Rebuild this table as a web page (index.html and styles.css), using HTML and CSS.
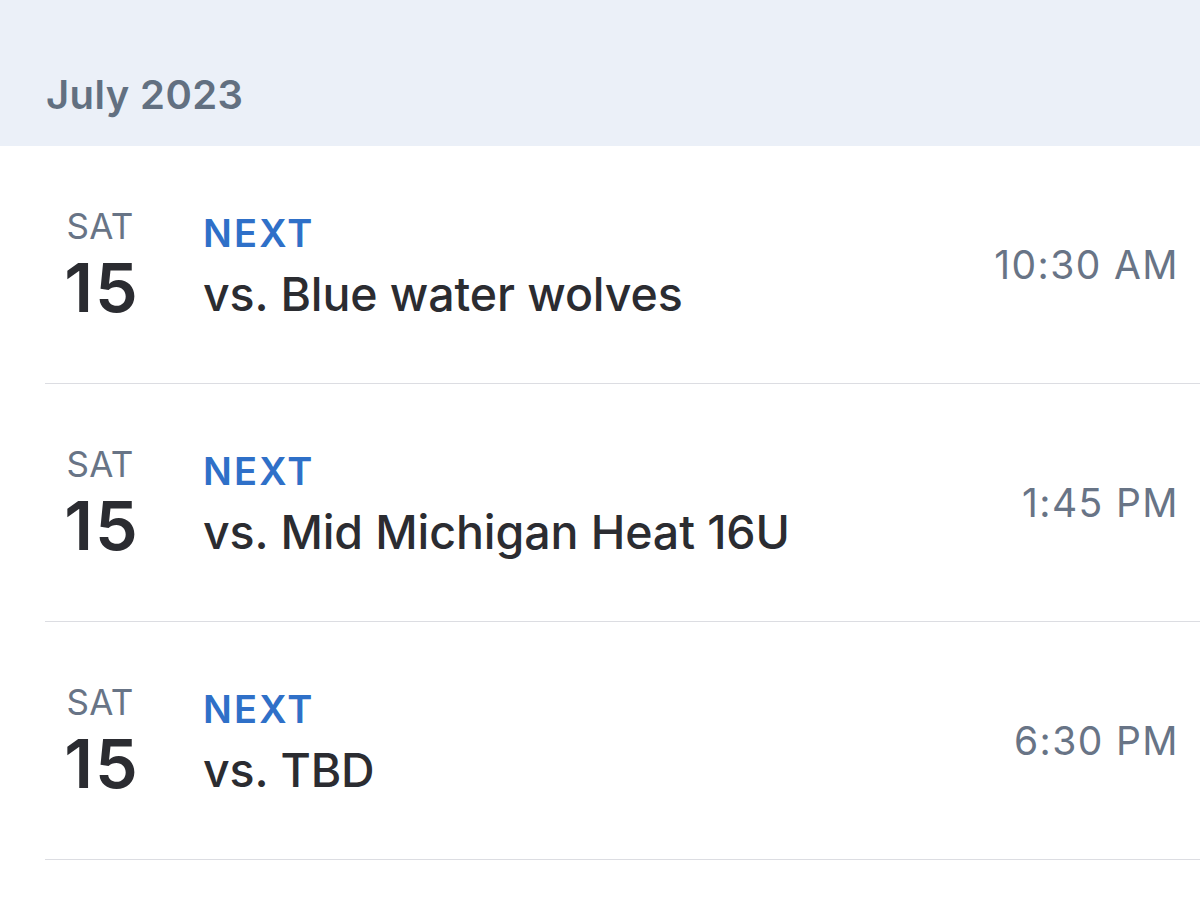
FILE: index.html
```html
<!DOCTYPE html>
<html lang="en">
<head>
<meta charset="utf-8">
<title>Schedule</title>
<link rel="stylesheet" href="styles.css">
</head>
<body>
<div class="month">July 2023</div>
<div class="list">
  <div class="row">
    <div class="date"><div class="dow">SAT</div><div class="day">15</div></div>
    <div class="info"><div class="tag">NEXT</div><div class="opp">vs. Blue water wolves</div></div>
    <div class="time">10:30 AM</div>
  </div>
  <div class="row">
    <div class="date"><div class="dow">SAT</div><div class="day">15</div></div>
    <div class="info"><div class="tag">NEXT</div><div class="opp">vs. Mid Michigan Heat 16U</div></div>
    <div class="time">1:45 PM</div>
  </div>
  <div class="row">
    <div class="date"><div class="dow">SAT</div><div class="day">15</div></div>
    <div class="info"><div class="tag">NEXT</div><div class="opp">vs. TBD</div></div>
    <div class="time">6:30 PM</div>
  </div>
</div>
</body>
</html>
```
FILE: styles.css
```css
* { box-sizing: border-box; }
html, body { margin: 0; padding: 0; background: #ffffff; }
body { font-family: Inter, "Noto Sans", "Liberation Sans", sans-serif; color: #2b2c31; }

.month {
  height: 146px;
  background: #ebf0f8;
  padding: 71px 0 0 46px;
  font-size: 40px;
  line-height: 48px;
  font-weight: 600;
  letter-spacing: 0.4px;
  color: #627081;
}

.list { padding-left: 45px; }

.row {
  display: flex;
  align-items: center;
  height: 238px;
  border-bottom: 1px solid #dcdde2;
  padding-right: 21px;
}

.date {
  width: 110px;
  padding-top: 2px;
  display: flex;
  flex-direction: column;
  align-items: center;
}
.dow {
  font-size: 35px;
  line-height: 40px;
  font-weight: 400;
  letter-spacing: 0.3px;
  color: #687486;
}
.day {
  margin-top: 3px;
  padding-left: 4px;
  font-size: 68px;
  line-height: 76px;
  font-weight: 600;
  letter-spacing: 2px;
  color: #2b2c31;
}

.info {
  flex: 1;
  margin-left: 48px;
  padding-top: 4px;
}
.tag {
  font-size: 38px;
  line-height: 44px;
  font-weight: 600;
  letter-spacing: 2.2px;
  color: #2f70c8;
}
.opp {
  margin-top: 11px;
  font-size: 46.5px;
  line-height: 56px;
  font-weight: 500;
  letter-spacing: -0.1px;
  color: #2b2c31;
}

.time {
  font-size: 39px;
  font-weight: 400;
  letter-spacing: 1.4px;
  color: #687486;
}
```
